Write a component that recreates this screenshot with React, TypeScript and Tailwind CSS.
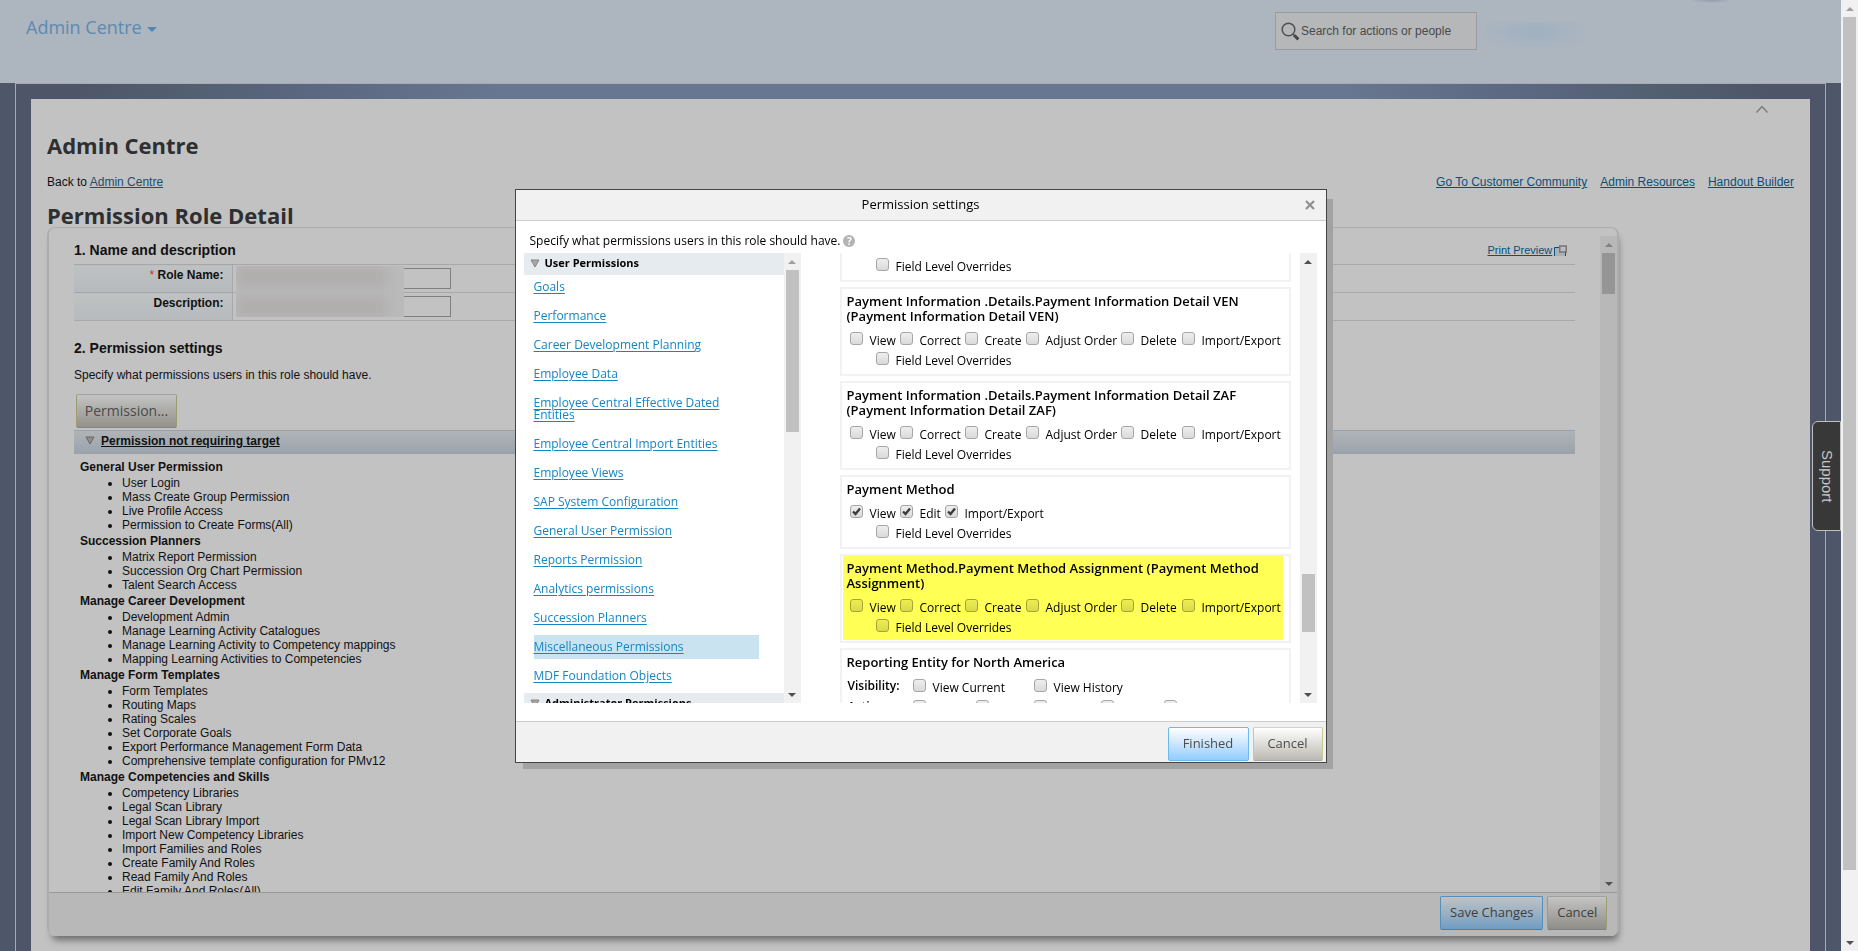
import { useState } from "react";
import { clsx } from "clsx";

const roleSections = [
  {
    title: "General User Permission",
    items: ["User Login", "Mass Create Group Permission", "Live Profile Access", "Permission to Create Forms(All)"],
  },
  {
    title: "Succession Planners",
    items: ["Matrix Report Permission", "Succession Org Chart Permission", "Talent Search Access"],
  },
  {
    title: "Manage Career Development",
    items: [
      "Development Admin",
      "Manage Learning Activity Catalogues",
      "Manage Learning Activity to Competency mappings",
      "Mapping Learning Activities to Competencies",
    ],
  },
  {
    title: "Manage Form Templates",
    items: [
      "Form Templates",
      "Routing Maps",
      "Rating Scales",
      "Set Corporate Goals",
      "Export Performance Management Form Data",
      "Comprehensive template configuration for PMv12",
    ],
  },
  {
    title: "Manage Competencies and Skills",
    items: [
      "Competency Libraries",
      "Legal Scan Library",
      "Legal Scan Library Import",
      "Import New Competency Libraries",
      "Import Families and Roles",
      "Create Family And Roles",
      "Read Family And Roles",
      "Edit Family And Roles(All)",
    ],
  },
];

const categories = [
  "Goals",
  "Performance",
  "Career Development Planning",
  "Employee Data",
  "Employee Central Effective Dated Entities",
  "Employee Central Import Entities",
  "Employee Views",
  "SAP System Configuration",
  "General User Permission",
  "Reports Permission",
  "Analytics permissions",
  "Succession Planners",
  "Miscellaneous Permissions",
  "MDF Foundation Objects",
];

const fullActions = [
  { label: "View", width: "w-[50px]" },
  { label: "Correct", width: "w-[65px]" },
  { label: "Create", width: "w-[61px]" },
  { label: "Adjust Order", width: "w-[95px]" },
  { label: "Delete", width: "w-[61px]" },
  { label: "Import/Export", width: "w-[99px]" },
];

const methodActions = [
  { label: "View", width: "w-[50px]", checked: true },
  { label: "Edit", width: "w-[45px]", checked: true },
  { label: "Import/Export", width: "w-[99px]", checked: true },
];

const entities = [
  {
    title: "Payment Information .Details.Payment Information Detail VEN (Payment Information Detail VEN)",
    actions: fullActions,
  },
  {
    title: "Payment Information .Details.Payment Information Detail ZAF (Payment Information Detail ZAF)",
    actions: fullActions,
  },
  { title: "Payment Method", actions: methodActions },
  {
    title: "Payment Method.Payment Method Assignment (Payment Method Assignment)",
    actions: fullActions,
    highlight: true,
  },
];

type Action = { label: string; width: string; checked?: boolean };

function Triangle({ up, className }: { up?: boolean; className?: string }) {
  return (
    <svg width="8" height="4" viewBox="0 0 8 4" className={className} aria-hidden="true">
      <path d={up ? "M0 4L4 0L8 4Z" : "M0 0L4 4L8 0Z"} fill="currentColor" />
    </svg>
  );
}

function Disclosure({ light }: { light?: boolean }) {
  return (
    <svg width="10" height="9" viewBox="0 0 10 9" aria-hidden="true" className="shrink-0">
      <path d="M1 1H9L5 8Z" fill={light ? "#a9a5a2" : "#918d8b"} stroke={light ? "#86827f" : "#6b6765"} strokeWidth="1" />
    </svg>
  );
}

function Scrollbar({
  track,
  thumb,
  up,
  down = "text-[#505050]",
  className,
}: {
  track: string;
  thumb: string;
  up: string;
  down?: string;
  className?: string;
}) {
  return (
    <div className={clsx("flex w-[17px] shrink-0 flex-col items-center", track, className)}>
      <div className="flex h-[17px] items-center">
        <Triangle up className={up} />
      </div>
      <div className="min-h-0 w-full flex-1">
        <div className={clsx("mx-0.5", thumb)} />
      </div>
      <div className="flex h-[17px] items-center">
        <Triangle className={down} />
      </div>
    </div>
  );
}

function Check({ label, width, checked = false }: Action) {
  const [on, setOn] = useState(checked);
  return (
    <label className={clsx("flex h-5 shrink-0 items-start gap-[7px] whitespace-nowrap", width)}>
      <span className="relative mt-px h-[13px] w-[13px] shrink-0">
        <input
          type="checkbox"
          checked={on}
          onChange={() => setOn(!on)}
          className="block h-[13px] w-[13px] appearance-none rounded-[3px] border border-[#a6a6a6] bg-linear-to-b from-[#eeeeee] to-[#dadada]"
        />
        {on && (
          <svg width="13" height="13" viewBox="0 0 13 13" fill="none" className="pointer-events-none absolute inset-0">
            <path d="M3 6.5L5.5 9L10 3.5" stroke="#3c3c3c" strokeWidth="2.4" />
          </svg>
        )}
      </span>
      <span className="leading-5">{label}</span>
    </label>
  );
}

function EntityCard({ title, actions, highlight }: { title: string; actions: Action[]; highlight?: boolean }) {
  return (
    <section className="relative shrink-0 border-2 border-[#f2f2f2] pt-[5px] pb-[3px]">
      <h4 className="pr-7 pl-[5px] text-[13px] leading-[15px] font-semibold">{title}</h4>
      <div className="mt-[7px] flex pl-2">
        {actions.map((a) => (
          <Check key={a.label} {...a} />
        ))}
      </div>
      <div className="pl-[34px]">
        <Check label="Field Level Overrides" width="w-40" />
      </div>
      {highlight && (
        <div className="pointer-events-none absolute top-0 right-1.5 bottom-px left-px bg-[#ffff55] mix-blend-multiply" />
      )}
    </section>
  );
}

function PermissionDialog() {
  const [active, setActive] = useState("Miscellaneous Permissions");

  return (
    <div
      role="dialog"
      aria-labelledby="dialog-title"
      className="absolute top-[189px] left-1/2 w-[812px] -translate-x-1/2"
    >
      <div className="absolute top-2.5 -right-1.5 -bottom-1.5 left-2 bg-[#a2a2a2]" />
      <div className="relative border border-[#444444] bg-white font-['Open_Sans',sans-serif] text-xs text-black">
        <header className="relative flex h-[31px] items-center justify-center border-b border-[#cccccc] bg-[#f1f1f1]">
          <h2 id="dialog-title" className="text-[13px] font-medium">
            Permission settings
          </h2>
          <button aria-label="Close" className="absolute right-2.5 p-px">
            <svg width="10" height="10" viewBox="0 0 10 10" fill="none">
              <path d="M1 1L9 9M9 1L1 9" stroke="#8f8f8f" strokeWidth="2.2" />
            </svg>
          </button>
        </header>

        <div className="pt-3 pb-[18px]">
          <div className="flex items-center gap-[3px] pl-3.5 leading-4">
            <p>Specify what permissions users in this role should have.</p>
            <button
              aria-label="Help"
              className="flex h-3 w-3 items-center justify-center rounded-full bg-[#b3b3b3] text-[10px] leading-3 font-bold text-white"
            >
              ?
            </button>
          </div>

          <div className="mt-1 flex h-[450px] pr-[9px] pl-2">
            <nav className="w-[260px] shrink-0 overflow-hidden">
              <h3 className="flex h-[22px] items-center gap-[5px] bg-[#e6ebf0] pb-0.5 pl-1.5 text-[11px] font-bold">
                <Disclosure light />
                User Permissions
              </h3>
              <ul className="flex flex-col gap-[5px] pr-[25px] pb-[5px] pl-2.5">
                {categories.map((c) => (
                  <li key={c} className={clsx("py-1.5 leading-3", c === active && "bg-[#c9e4f0]")}>
                    <a
                      href="#"
                      onClick={() => setActive(c)}
                      className="text-[#1585c4] underline decoration-1 underline-offset-2"
                    >
                      {c}
                    </a>
                  </li>
                ))}
              </ul>
              <h3 className="flex h-[22px] items-center gap-[5px] bg-[#e6ebf0] pb-0.5 pl-1.5 text-[11px] font-bold">
                <Disclosure light />
                Administrator Permissions
              </h3>
            </nav>
            <Scrollbar track="bg-[#f1f1f1]" thumb="h-[162px] bg-[#c1c1c1]" up="text-[#a0a0a0]" />

            <div className="ml-[39px] flex min-w-0 flex-1 flex-col gap-[5px] overflow-hidden">
              <section className="shrink-0 border-2 border-t-0 border-[#f2f2f2] pt-1 pb-[3px] pl-[34px]">
                <Check label="Field Level Overrides" width="w-40" />
              </section>
              {entities.map((e) => (
                <EntityCard key={e.title} {...e} />
              ))}
              <section className="shrink-0 border-2 border-[#f2f2f2] pt-[5px]">
                <h4 className="pl-[5px] text-[13px] leading-[15px] font-semibold">
                  Reporting Entity for North America
                </h4>
                <div className="mt-2 flex pl-1.5">
                  <span className="w-[65px] leading-4 font-semibold">Visibility:</span>
                  <Check label="View Current" width="w-[121px]" />
                  <Check label="View History" width="w-[121px]" />
                </div>
                <div className="mt-px flex pl-1.5">
                  <span className="w-[65px] leading-4 font-semibold">Actions:</span>
                  <Check label="View" width="w-[63px]" />
                  <Check label="Edit" width="w-[58px]" />
                  <Check label="Create" width="w-[67px]" />
                  <Check label="Delete" width="w-[63px]" />
                  <Check label="Import" width="w-[63px]" />
                </div>
              </section>
            </div>
            <Scrollbar
              track="bg-[#f1f1f1]"
              thumb="mt-[304px] h-[58px] bg-[#c1c1c1]"
              up="text-[#505050]"
              className="ml-[9px]"
            />
          </div>
        </div>

        <footer className="flex justify-end gap-1 border-t border-[#cccccc] bg-[#f1f1f1] pt-[5px] pr-[3px] pb-px text-[13px] text-[#4d4d4d]">
          <button className="h-[34px] w-[81px] rounded-xs border border-[#6bb8f2] bg-linear-to-b from-white via-[#cbe5fd] to-[#90cdff]">
            Finished
          </button>
          <button className="h-[34px] w-[70px] rounded-xs border border-x-[#c8c994] border-t-[#d0d0d0] border-b-[#a9a9a9] bg-linear-to-b from-white to-[#bbbab2]">
            Cancel
          </button>
        </footer>
      </div>
    </div>
  );
}

function TopBar() {
  return (
    <header className="relative h-[83px] shrink-0 bg-[#adb5bf]">
      <div className="flex items-start justify-between pl-[26px]">
        <button className="mt-[13px] flex items-center gap-[5px] font-['Open_Sans',sans-serif] text-lg leading-7 text-[#5b8ab3]">
          Admin Centre
          <svg width="10" height="5" viewBox="0 0 10 5" className="mt-1">
            <path d="M0 0H10L5 5Z" fill="#4d88b8" />
          </svg>
        </button>
        <div className="mt-3 mr-[249px] flex gap-2">
          <label className="flex h-[38px] w-[202px] items-center gap-px border border-[#999c9f] bg-[#b5b7b9] pl-[5px]">
            <svg width="19" height="19" viewBox="0 0 19 19" fill="none" className="shrink-0">
              <circle cx="7.5" cy="7.5" r="6.3" stroke="#505050" strokeWidth="1.5" />
              <path d="M12 12L13.5 13.5" stroke="#505050" strokeWidth="1.5" />
              <path d="M13.2 13.2L17.4 17.4" stroke="#454545" strokeWidth="3" />
            </svg>
            <input
              aria-label="Search"
              placeholder="Search for actions or people"
              className="w-full min-w-0 text-xs outline-none placeholder:text-[#4a4a4a]"
            />
          </label>
          <div className="mt-2.5 h-7 w-[107px] bg-[radial-gradient(ellipse_at_45%_35%,#9fb0c0_0%,#a8b4c0_45%,#adb5bf_75%)]" />
        </div>
      </div>
      <div className="absolute top-0 right-[110px] h-[3px] w-10 bg-[radial-gradient(ellipse_at_50%_0%,#8f9dac_0%,#adb5bf_75%)]" />
    </header>
  );
}

function RoleDetail() {
  return (
    <div className="flex min-h-0 w-[90%] flex-1 flex-col overflow-hidden rounded-lg border-x-2 border-t border-[#adadad] shadow-[2px_7px_7px_-3px_rgba(0,0,0,0.45)]">
      <div className="flex min-h-0 flex-1 bg-[#c2c2c2]">
        <div className="flex-1 overflow-hidden px-[25px] pt-3">
          <div className="flex items-center justify-between pr-2">
            <h3 className="text-sm leading-5 font-bold">1. Name and description</h3>
            <a href="#" className="flex items-center gap-0.5 text-[11px] leading-4 text-[#0b4f78] underline">
              Print Preview
              <svg width="13" height="11" viewBox="0 0 13 11" fill="none">
                <path d="M0.5 11V2.5H5" stroke="#0b4f78" />
                <path d="M1 3H5V7H11V11H1Z" fill="#a9b0b6" />
                <path d="M11.5 7V11" stroke="#0b4f78" />
                <rect x="5.75" y="1" width="6.5" height="6" fill="#bdbdbd" stroke="#757575" strokeWidth="1.5" />
              </svg>
            </a>
          </div>

          <div className="relative mt-1">
            <table className="w-full border-collapse border-y border-[#a8a8a8]">
              <tbody>
                <tr className="h-7 border-b border-[#a8a8a8]">
                  <th className="w-[158px] border-r border-[#a8a8a8] bg-linear-to-b from-[#bfc1c2] to-[#b6babd] pt-[3px] pr-2 text-right align-top leading-[15px]">
                    <label htmlFor="role-name">
                      <span className="font-normal text-[#c0392b]">*</span> Role Name:
                    </label>
                  </th>
                  <td className="pl-1">
                    <input id="role-name" className="block h-[21px] w-[214px] border border-[#808080] bg-[#c2c2c2]" />
                  </td>
                </tr>
                <tr className="h-7">
                  <th className="border-r border-[#a8a8a8] bg-linear-to-b from-[#bfc1c2] to-[#b6babd] pt-[3px] pr-2 text-right align-top leading-[15px]">
                    <label htmlFor="description">Description:</label>
                  </th>
                  <td className="pl-1">
                    <input id="description" className="block h-[21px] w-[214px] border border-[#808080] bg-[#c2c2c2]" />
                  </td>
                </tr>
              </tbody>
            </table>
            <div className="absolute top-0.5 left-[162px] flex h-[51px] w-[168px] flex-col justify-between overflow-hidden bg-[#bababa]">
              <div className="h-5 w-[150px] bg-[#b0adad] blur-[6px]" />
              <div className="h-5 w-[150px] bg-[#b0adad] blur-[6px]" />
            </div>
          </div>

          <h3 className="mt-[17px] text-sm leading-5 font-bold">2. Permission settings</h3>
          <p className="mt-[9px] leading-4">Specify what permissions users in this role should have.</p>
          <button className="mt-[11px] ml-0.5 block h-[34px] w-[101px] rounded-xs border border-x-[#9c9d70] border-t-[#a0a0a0] border-b-[#858585] bg-linear-to-b from-[#c4c4c4] to-[#92918b] font-['Open_Sans',sans-serif] text-sm text-[#4a4a4a]">
            Permission...
          </button>

          <div className="mt-0.5 flex h-6 items-center gap-1.5 border-t border-[#98a2ac] bg-linear-to-b from-[#b0b4b7] to-[#99a2ac] pb-1 pl-[11px]">
            <Disclosure />
            <a href="#" className="font-bold underline">
              Permission not requiring target
            </a>
          </div>

          <div className="pt-1 pl-1.5">
            {roleSections.map((s) => (
              <section key={s.title}>
                <h4 className="leading-[18px] font-bold">{s.title}</h4>
                <ul className="list-disc pl-[42px] leading-[14px]">
                  {s.items.map((item) => (
                    <li key={item}>{item}</li>
                  ))}
                </ul>
              </section>
            ))}
          </div>
        </div>
        <Scrollbar track="bg-[#b8b8b8]" thumb="h-[41px] bg-[#959595]" up="text-[#828282]" className="mt-2" />
      </div>

      <footer className="flex h-11 shrink-0 justify-end gap-1 border-t border-[#999999] bg-[#b8b8b8] pt-[3px] pr-2.5 font-['Open_Sans',sans-serif] text-[13px] text-[#3e3e3e]">
        <button className="h-[34px] w-[103px] rounded-xs border border-[#5590bd] border-b-[#3c82b6] bg-linear-to-b from-[#bfc2c6] via-[#9bb0c3] to-[#6f9dc3]">
          Save Changes
        </button>
        <button className="h-[34px] w-[60px] rounded-xs border border-x-[#9c9d70] border-t-[#a0a0a0] border-b-[#808080] bg-linear-to-b from-[#c4c4c4] to-[#8f8e88]">
          Cancel
        </button>
      </footer>
    </div>
  );
}

export default function App() {
  return (
    <div className="flex h-screen overflow-hidden font-['Liberation_Sans',Arial,sans-serif] text-xs text-[#111111]">
      <div className="relative flex min-w-0 flex-1 flex-col">
        <TopBar />
        <div className="flex min-h-0 flex-1 bg-[#4d5769] px-[15px]">
          <div className="flex min-w-0 flex-1 border-x border-t border-[#a9aaab] bg-[linear-gradient(90deg,#4e5568_0%,#4e5568_3%,#525f70_9%,#5a657e_15%,#687791_27%,#687791_73%,#5a657e_85%,#525f70_91%,#4e5568_97%)] px-[15px] pt-[15px]">
            <main className="flex min-w-0 flex-1 flex-col bg-[#c2c2c2] px-4 pb-[15px]">
              <div className="flex h-[30px] justify-end pt-1.5 pr-[26px]">
                <button aria-label="Collapse header" className="h-2">
                  <svg width="12" height="8" viewBox="0 0 12 8" fill="none">
                    <path d="M0.5 7.5L6 1.5L11.5 7.5" stroke="#787c80" strokeWidth="1.5" />
                  </svg>
                </button>
              </div>
              <h1 className="font-['Open_Sans',sans-serif] text-[22px] leading-8 font-bold text-[#2d2f30]">
                Admin Centre
              </h1>
              <div className="mt-[13px] flex justify-between leading-4">
                <p>
                  Back to{" "}
                  <a href="#" className="text-[#1f4e6e] underline">
                    Admin Centre
                  </a>
                </p>
                <nav className="flex gap-[13px] text-[#0b4f78]">
                  <a href="#" className="underline">
                    Go To Customer Community
                  </a>
                  <a href="#" className="underline">
                    Admin Resources
                  </a>
                  <a href="#" className="underline">
                    Handout Builder
                  </a>
                </nav>
              </div>
              <h2 className="mt-3.5 mb-px font-['Open_Sans',sans-serif] text-[22px] leading-[22px] font-bold text-[#2d2f30]">
                Permission Role Detail
              </h2>
              <RoleDetail />
            </main>
          </div>
        </div>

        <button className="absolute top-[421px] right-0 flex h-[110px] w-[29px] items-center justify-center rounded-l-md border border-[#c0c0c0] bg-[#383838] text-[15px] text-[#c8c8c8] [writing-mode:vertical-rl]">
          Support
        </button>
        <PermissionDialog />
      </div>
      <Scrollbar track="bg-[#f1f1f1]" thumb="h-[93%] bg-[#c1c1c1]" up="text-[#a0a0a0]" />
    </div>
  );
}
